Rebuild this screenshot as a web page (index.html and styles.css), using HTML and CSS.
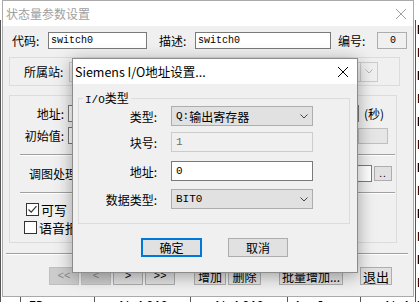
FILE: index.html
```html
<!DOCTYPE html>
<html lang="zh-CN">
<head>
  <meta charset="UTF-8" />
  <meta name="viewport" content="width=device-width, initial-scale=1.0"/>
  <title>状态量参数设置</title>
  <link rel="stylesheet" href="styles.css">
</head>
<body>
  <div class="desk">

    <!-- table behind the dialogs -->
    <div class="sheet">
      <div class="sheet-row"><span></span><span>ID</span><span>switch000</span><span>switch000</span><span>bool</span><span>switch</span><span>E</span></div>
      <div class="sheet-row"><span></span><span>ID</span><span>switch001</span><span>switch001</span><span>bool</span><span>switch</span><span>F</span></div>
      <div class="sheet-row"><span></span><span>ID</span><span>switch002</span><span>switch002</span><span>bool</span><span>switch</span><span>E</span></div>
      <div class="sheet-row"><span></span><span>ID</span><span>switch003</span><span>switch003</span><span>bool</span><span>switch</span><span>F</span></div>
      <div class="sheet-row"><span></span><span>ID</span><span>switch004</span><span>switch004</span><span>bool</span><span>switch</span><span>E</span></div>
      <div class="sheet-row"><span></span><span>ID</span><span>switch005</span><span>switch005</span><span>bool</span><span>switch</span><span>F</span></div>
      <div class="sheet-row"><span></span><span>ID</span><span>switch006</span><span>switch006</span><span>bool</span><span>switch</span><span>E</span></div>
      <div class="sheet-row"><span></span><span>ID</span><span>switch007</span><span>switch007</span><span>bool</span><span>switch</span><span>F</span></div>
      <div class="sheet-row"><span></span><span>ID</span><span>switch008</span><span>switch008</span><span>bool</span><span>switch</span><span>E</span></div>
      <div class="sheet-row"><span></span><span>ID</span><span>switch009</span><span>switch009</span><span>bool</span><span>switch</span><span>F</span></div>
      <div class="sheet-row"><span></span><span>ID</span><span>switch010</span><span>switch010</span><span>bool</span><span>switch</span><span>E</span></div>
      <div class="sheet-row"><span></span><span>ID</span><span>switch011</span><span>switch011</span><span>bool</span><span>switch</span><span>F</span></div>
      <div class="sheet-row"><span></span><span>ID</span><span>switch012</span><span>switch012</span><span>bool</span><span>switch</span><span>E</span></div>
    </div>

    <!-- 状态量参数设置 (inactive) -->
    <div class="win main">
      <div class="titlebar">
        <span>状态量参数设置</span>
        <svg width="10" height="10" viewBox="0 0 10 10"><path d="M0 0L10 10M10 0L0 10" stroke="#a0a0a0" stroke-width="1"/></svg>
      </div>
      <div class="main-body">
        <div class="row1">
          <span class="lbl l-code">代码:</span>
          <span class="edit e-code mono">switch0</span>
          <span class="lbl l-desc">描述:</span>
          <span class="edit e-desc mono">switch0</span>
          <span class="lbl l-no">编号:</span>
          <span class="edit e-no mono">0</span>
        </div>

        <div class="group g-station">
          <span class="lbl l-station">所属站:</span>
          <span class="combo c-station">
            <span class="combo-arrow">
              <svg width="8" height="5" viewBox="0 0 8 5"><path d="M0.5 0.5L4 4L7.5 0.5" fill="none" stroke="#b5b5b5"/></svg>
            </span>
          </span>
        </div>

        <div class="group g-param">
          <div class="prow">
            <span class="lbl col">地址:</span>
            <span class="edit e-addr"></span>
            <span class="sec">(秒)</span>
          </div>
          <div class="prow prow-b">
            <span class="lbl col">初始值:</span>
            <span class="edit e-init"></span>
            <span class="dis-box"></span>
          </div>
          <div class="hline"></div>
          <div class="prow">
            <span class="lbl l-pic">调图处理</span>
            <span class="edit e-pic"></span>
            <span class="dots">..</span>
          </div>
          <div class="hline"></div>
          <div class="check c-write">
            <span class="box">
              <svg width="11" height="11" viewBox="0 0 11 11"><path d="M1.5 5.5L4.2 8.2L9.5 2.2" fill="none" stroke="#333" stroke-width="1.2"/></svg>
            </span>
            <span>可写</span>
          </div>
          <div class="check c-voice">
            <span class="box"></span>
            <span>语音报警</span>
          </div>
        </div>

        <div class="sep"></div>

        <div class="btn-row">
          <span class="btn nav off">&lt;&lt;</span>
          <span class="btn nav off">&lt;</span>
          <span class="btn nav">&gt;</span>
          <span class="btn nav">&gt;&gt;</span>
          <span class="btn b-add">增加</span>
          <span class="btn b-del">删除</span>
          <span class="btn b-bulk">批量增加...</span>
          <span class="btn b-exit">退出</span>
        </div>
      </div>
    </div>

    <!-- Siemens I/O地址设置 (active, on top) -->
    <div class="win io">
      <div class="titlebar">
        <span>Siemens I/O地址设置...</span>
        <svg width="10" height="10" viewBox="0 0 10 10"><path d="M0 0L10 10M10 0L0 10" stroke="#000" stroke-width="1"/></svg>
      </div>
      <div class="io-body">
        <div class="group g-io">
          <span class="gtitle"><span class="mono">I/O</span>类型</span>
          <div class="irow r1">
            <span class="lbl icol">类型:</span>
            <span class="combo c-io"><span class="mono">Q:</span>输出寄存器
              <svg class="chev" width="8" height="5" viewBox="0 0 8 5"><path d="M0.5 0.5L4 4L7.5 0.5" fill="none" stroke="#444"/></svg>
            </span>
          </div>
          <div class="irow r2">
            <span class="lbl icol">块号:</span>
            <span class="edit c-io dis mono">1</span>
          </div>
          <div class="irow r3">
            <span class="lbl icol">地址:</span>
            <span class="edit c-io mono">0</span>
          </div>
          <div class="irow r4">
            <span class="lbl icol">数据类型:</span>
            <span class="combo c-io"><span class="mono">BIT0</span>
              <svg class="chev" width="8" height="5" viewBox="0 0 8 5"><path d="M0.5 0.5L4 4L7.5 0.5" fill="none" stroke="#444"/></svg>
            </span>
          </div>
        </div>
        <div class="io-btns">
          <span class="btn ok">确定</span>
          <span class="btn cancel">取消</span>
        </div>
      </div>
    </div>

  </div>
</body>
</html>
```

FILE: styles.css
```css
body {
  margin: 0;
  font-family: "Noto Sans CJK SC", sans-serif;
  font-size: 12px;
  color: #000;
}
.desk {
  position: relative;
  width: 419px;
  height: 302px;
  overflow: hidden;
  background: #f0f0f0;
}
.mono {
  font-family: "Liberation Mono", "Noto Sans CJK SC", monospace;
  font-size: 11px;
}

/* background table */
.sheet {
  padding-top: 16px;
  background: #fff;
}
.sheet-row {
  display: grid;
  grid-template-columns: 20px 74px 96px 97px 73px 55px 20px;
  height: 23px;
  line-height: 23px;
  padding-top: 4px;
  box-sizing: border-box;
  font-family: "Liberation Mono", monospace;
  font-size: 12px;
  font-weight: bold;
}
.sheet-row span {
  border-left: 1px solid #555;
  padding-left: 8px;
}
.sheet-row span:last-child {
  padding-left: 1px;
}

/* windows */
.win {
  position: absolute;
  box-sizing: border-box;
  background: #f0f0f0;
  border: 1px solid #aaa;
}
.titlebar {
  height: 25px;
  background: #fff;
  display: flex;
  align-items: center;
  justify-content: space-between;
}
.main {
  left: 2px;
  top: 0;
  width: 412px;
  height: 297px;
}
.main .titlebar {
  color: #a0a0a0;
  padding: 0 7px 0 3px;
}
.io {
  left: 72px;
  top: 58px;
  width: 286px;
  height: 215px;
  border-color: #8c8c8c;
  box-shadow: 0 3px 16px rgba(0,0,0,0.35);
}
.io .titlebar {
  font-size: 12.5px;
  padding: 0 9px 0 2px;
}

/* shared controls */
.lbl {
  white-space: nowrap;
}
.edit, .combo {
  box-sizing: border-box;
  display: flex;
  align-items: center;
  background: #fff;
  border: 1px solid #7a7a7a;
  padding-left: 3px;
}
.combo {
  background: #e1e1e1;
  border-color: #adadad;
}
.edit.dis {
  background: #f0f0f0;
  border-color: #ccc;
  color: #6d6d6d;
}
.group {
  box-sizing: border-box;
  border: 1px solid #dcdcdc;
}
.btn {
  box-sizing: border-box;
  display: flex;
  align-items: center;
  justify-content: center;
  background: #e1e1e1;
  border: 1px solid #adadad;
  height: 18px;
}

/* main dialog body */
.main-body {
  padding-left: 6px;
}
.row1 {
  display: flex;
  align-items: center;
  height: 17px;
  margin-top: 6px;
}
.row1 .edit {
  height: 17px;
  padding-left: 2px;
  font-size: 10px;
}
.l-code { margin-left: 3px; width: 36px; }
.e-code { width: 99px; }
.l-desc { margin-left: 12px; width: 36px; }
.e-desc { width: 136px; }
.l-no { margin-left: 7px; width: 39px; }
.e-no {
  width: 30px;
  background: #f0f0f0 !important;
  border-color: #adadad !important;
  justify-content: center;
}

.g-station {
  display: flex;
  align-items: center;
  width: 391px;
  height: 29px;
  margin-top: 8px;
}
.l-station { margin-left: 14px; width: 45px; }
.c-station {
  width: 309px;
  height: 20px;
  background: #f0f0f0;
  border-color: #ccc;
  justify-content: flex-end;
  padding: 0;
}
.combo-arrow {
  width: 16px;
  height: 18px;
  border-left: 1px solid #ccc;
  display: flex;
  align-items: center;
  justify-content: center;
}

.g-param {
  width: 388px;
  height: 148px;
  margin-top: 9px;
  padding-top: 9px;
}
.prow {
  display: flex;
  align-items: center;
  height: 17px;
}
.prow .edit { height: 17px; }
.prow-b { margin-top: 5px; }
.col {
  width: 54px;
  text-align: right;
  margin-right: 4px;
}
.e-addr { width: 291px; }
.sec { margin-left: 5px; }
.e-init { width: 284px; }
.dis-box {
  box-sizing: border-box;
  width: 30px;
  height: 16px;
  margin-left: 6px;
  background: #e6e6e6;
  border: 1px solid #bfbfbf;
}
.hline {
  height: 1px;
  margin: 10px 1px 10px 10px;
  background: #a0a0a0;
  border-bottom: 1px solid #fff;
}
.hline + .prow { margin-top: -1px; }
.l-pic { margin-left: 19px; width: 63px; }
.e-pic { width: 280px; }
.dots {
  box-sizing: border-box;
  width: 18px;
  height: 15px;
  margin-left: 2px;
  background: #e1e1e1;
  border: 1px solid #adadad;
  font-size: 10px;
  line-height: 11px;
  text-align: center;
  letter-spacing: 1px;
}
.check {
  display: flex;
  align-items: center;
  gap: 2px;
  height: 13px;
  font-size: 13px;
}
.c-write { margin: -1px 0 0 16px; }
.c-voice { margin: 5px 0 0 14px; }
.box {
  box-sizing: border-box;
  width: 13px;
  height: 13px;
  background: #fff;
  border: 1px solid #333;
  display: flex;
  align-items: center;
  justify-content: center;
}

.sep {
  height: 1px;
  width: 402px;
  margin: 10px 0 0 -3px;
  background: #a0a0a0;
  border-bottom: 1px solid #fff;
}
.btn-row {
  display: flex;
  margin: 12px 0 0 40px;
}
.nav {
  width: 30px;
  margin-right: 2px;
  font-family: "Liberation Mono", monospace;
  font-size: 11px;
}
.nav.off {
  background: #cccccc;
  border-color: #bfbfbf;
  color: #8a8a8a;
}
.b-add { width: 32px; margin-left: 17px; }
.b-del { width: 33px; margin-left: 2px; }
.b-bulk { width: 64px; margin-left: 18px; }
.b-exit { width: 32px; margin-left: 17px; font-size: 13px; }

/* I/O dialog body */
.io-body {
  padding: 14px 0 0 5px;
}
.g-io {
  width: 272px;
  height: 126px;
}
.gtitle {
  display: block;
  width: fit-content;
  height: 14px;
  line-height: 14px;
  margin: -8px 0 0 4px;
  padding: 0 2px;
  background: #f0f0f0;
}
.irow {
  display: flex;
  align-items: center;
  height: 20px;
}
.r1 { margin-top: 1px; }
.r2 { margin-top: 6px; }
.r3 { margin-top: 9px; }
.r4 { margin-top: 8px; }
.icol {
  width: 78px;
  text-align: right;
  margin-right: 14px;
}
.c-io {
  width: 142px;
  height: 20px;
  padding-left: 4px;
}
.chev {
  margin-left: auto;
  margin-right: 4px;
}
.io-btns {
  display: flex;
  margin: 14px 0 0 63px;
}
.io-btns .btn {
  height: 19px;
  font-size: 12px;
}
.ok {
  width: 61px;
  border: 2px solid #0078d7 !important;
}
.cancel {
  width: 60px;
  margin-left: 26px;
}
```
